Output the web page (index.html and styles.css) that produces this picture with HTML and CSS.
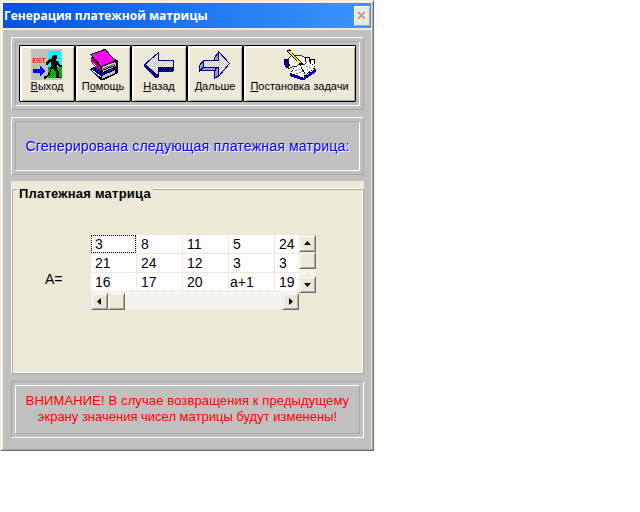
FILE: index.html
```html
<!DOCTYPE html>
<html lang="ru">
<head>
<meta charset="utf-8">
<title>Генерация платежной матрицы</title>
<link rel="stylesheet" href="styles.css">
</head>
<body>
<main class="window">
  <header class="titlebar">
    <h1 class="title">Генерация платежной матрицы</h1>
    <button class="close" aria-label="Закрыть"><svg width="10" height="10" viewBox="0 0 10 10"><path d="M2 2l7 7M9 2l-7 7" stroke="#fff" stroke-width="2"/><path d="M1 1l7 7M8 1l-7 7" stroke="#aca899" stroke-width="2"/></svg></button>
  </header>
  <div class="content">
    <section class="panel toolbar-panel">
      <nav class="panel-inner toolbar">
        <button class="tool"><svg class="icon" viewBox="0 0 32 32" shape-rendering="crispEdges">
          <defs><pattern id="grass" width="2" height="2" patternUnits="userSpaceOnUse"><path fill="#00e000" d="M0 0h2v2H0z"/><path fill="#008000" d="M0 0h1v1H0zM1 1h1v1H1z"/></pattern></defs>
          <path fill="#c0c0c0" d="M0 0h31v31H0z"/><path fill="#0ff" d="M17 2h13v17H17z"/><path fill="url(#grass)" d="M17 18h14v11H17z"/>
          <text class="exit-word" x="1.500" y="14" textLength="13" lengthAdjust="spacingAndGlyphs">EXiT</text>
          <path fill="#00f" d="M2 20h7v-3l6 5-6 5v-3H2z"/>
          <path d="M22 6h4v4h-1v2h2l2 4h2v2h-3l-2-3v5l2 3v5h2v1h-5v-6l-4-4-2 6-3 4h-1v1h-2v-3h3l3-5 1-7v-2h-1l-2 3h-2v-2l3-4 4-1V9h-1V7h1z"/></svg>
          <span class="tool-label"><u>В</u>ыход</span></button>
        <button class="tool"><svg class="icon" viewBox="0 0 32 32" shape-rendering="crispEdges">
          <path d="M3 20l10 11h4l14-7v-7L16 14z"/><path fill="#00f" d="M5 19l8-2 14 4-12 5zM4 22l9 7v-2l-9-7z"/><path fill="#c0c0c0" d="M15 27l13-6v3l-13 6z"/><path stroke="#fff" d="M5 21l9 7"/>
          <path d="M4 12l10 12h3l14-7v-6L16 8z"/><path fill="#f00000" d="M6 12l8-2 14 4-13 5zM5 15l9 7v-3l-9-6z"/><path fill="#c0c0c0" d="M16 20l13-6v3l-13 6z"/><path stroke="#fff" d="M6 14l9 7"/>
          <path d="M3 5l12 17 13-5v-6l-13 4z"/><path fill="#a000a0" d="M4 7l10 12v3L4 11z"/><path fill="#c0c0c0" d="M15 18l13-5v3l-13 5z"/><path stroke="#808080" d="M15 20l13-5"/>
          <path fill="#f0f" stroke="#000" d="M3.500 5.500L18 .5l10.500 11-14 6z"/></svg>
          <span class="tool-label">П<u>о</u>мощь</span></button>
        <button class="tool"><svg class="icon" viewBox="0 0 32 32" shape-rendering="crispEdges">
          <defs><pattern id="weave" width="2" height="2" patternUnits="userSpaceOnUse"><path fill="#fff" d="M0 0h2v2H0z"/><path fill="#c0c0c0" d="M0 0h1v1H0zM1 1h1v1H1z"/></pattern></defs>
          <path fill="#000080" d="M1 15h3l11 10v4h-2L1 18zM16 18h15v4l-2 1H16z"/>
          <path fill="url(#weave)" stroke="#000080" d="M2 15.500L15.500 3.500v8h15v7h-15V27z"/><path fill="none" stroke="#00c" d="M1.500 15.500l14-12"/></svg>
          <span class="tool-label"><u>Н</u>азад</span></button>
        <button class="tool"><svg class="icon" viewBox="0 0 32 32" shape-rendering="crispEdges">
          <path fill="#9999b8" stroke="#0000a0" d="M4.500 11.500l-4 5v6l4-4zM19.500 3.500l-4 5v3h4zM15.500 20v9l4-2v-9z"/>
          <path fill="#9999b8" stroke="#000080" d="M1 21.500l3-3h12v3z"/>
          <path fill="url(#weave)" stroke="#000080" d="M4.500 11.500h15v-9l11 12-11 13v-9h-15z"/></svg>
          <span class="tool-label"><u>Д</u>альше</span></button>
        <button class="tool tool-wide"><svg class="icon" viewBox="0 0 32 32" shape-rendering="crispEdges">
          <path fill="#0000c0" d="M6 25h2l11 4 12-9h1v3L20 31h-3L6 27z"/>
          <path fill="#fff" d="M6.500 24.500l5-9 8-7 12 10-13 10z"/><path fill="none" stroke="#000" stroke-dasharray="2 1" d="M11 16l-4.500 8.500 12 4 13-10-4-4"/>
          <path stroke="#909090" stroke-dasharray="2 1" fill="none" d="M11 22l6-2M12 25l7-3M22 18l4-2M23 21l5-4"/><path stroke="#000" d="M17 18l4 7"/>
          <path fill="#fff" stroke="#000" stroke-width=".8" d="M4 10l3-3 4-1h6l4 3 2 4-3 3-5-1-2 2H9l-3 2H4z"/>
          <path fill="#000" d="M0 10h4l2 6-2 3H2l-2-4z"/><path fill="#00f" d="M1 11h2l1 5-1 2-2-3z"/>
          <path stroke="#000" stroke-width="3" d="M4 1l14 15"/><path stroke="#ffe800" stroke-width="1.700" d="M5 2l11 12"/>
          <path fill="#fff" stroke="#000" d="M21.500 12.500v-4h4v4M26.500 14.500v-4h4v4"/></svg>
          <span class="tool-label"><u>П</u>остановка задачи</span></button>
      </nav>
    </section>
    <section class="panel"><div class="panel-inner heading"><p class="heading-text">Сгенерирована следующая платежная матрица:</p></div></section>
    <fieldset class="group">
      <div class="group-frame">
        <h2 class="group-title"><span>Платежная матрица</span></h2>
        <div class="matrix">
          <span class="matrix-name">A=</span>
          <div class="grid">
            <div class="cells">
              <span class="focus">3</span><span>8</span><span>11</span><span>5</span><span>24</span>
              <span>21</span><span>24</span><span>12</span><span>3</span><span>3</span>
              <span>16</span><span>17</span><span>20</span><span class="tight">a+1</span><span>19</span>
            </div>
            <div class="scroll vertical"><i class="knob"><svg viewBox="0 0 9 9"><path d="M1 6h7L4.500 2z"/></svg></i><i class="knob"></i><i class="track"></i><i class="knob"><svg viewBox="0 0 9 9"><path d="M1 3h7L4.500 7z"/></svg></i></div>
            <div class="scroll horizontal"><i class="knob"><svg viewBox="0 0 9 9"><path d="M6 1v7L2 4.500z"/></svg></i><i class="knob"></i><i class="track"></i><i class="knob"><svg viewBox="0 0 9 9"><path d="M3 1v7l4-3.500z"/></svg></i></div>
          </div>
        </div>
      </div>
    </fieldset>
    <section class="panel sunken"><div class="panel-inner warning"><p class="warning-lead">ВНИМАНИЕ! В случае возвращения к предыдущему</p><p>экрану значения чисел матрицы будут изменены!</p></div></section>
  </div>
</main>
</body>
</html>
```
FILE: styles.css
```css
* { box-sizing: border-box; }
body { margin: 0; background: #fff; font-family: "Liberation Sans", Arial, sans-serif; color: #000; }
p, h1, h2, fieldset { margin: 0; padding: 0; border: 0; min-width: 0; }
button { margin: 0; padding: 0; font: inherit; color: inherit; }
svg { display: block; }

.window {
  width: 374px; height: 451px; padding: 1px; background: #ece9d8;
  border: 1px solid; border-color: #ece9d8 #716f64 #716f64 #ece9d8;
  box-shadow: inset 1px 1px #fff, inset -1px -1px #aca899;
}
.titlebar {
  display: flex; align-items: center; justify-content: space-between;
  height: 25px; margin: 1px; padding: 0 1px; width: 368px;
  background: linear-gradient(90deg, #0054e3, #3d95ff);
}
.title {
  font: bold 12px/25px "Open Sans", "Noto Sans", sans-serif; color: #fff;
  white-space: nowrap;
}
.close {
  display: flex; align-items: center; justify-content: center; width: 16px; height: 20px;
  background: #ece9d8; border: 1px solid; border-color: #fff #aca899 #aca899 #fff;
}
.content {
  display: flex; flex-direction: column; gap: 7px; width: 368px; height: 419px;
  margin: 1px; margin-top: 2px; padding: 7px 7px 0 8px; background: #c0c0c0;
}
.panel { height: 58px; padding: 3px; border: 1px solid; border-color: #fff #a8a89c #a8a89c #fff; }
.panel-inner { height: 100%; border: 1px solid; border-color: #a8a89c #fff #fff #a8a89c; }
.toolbar-panel { height: 73px; }
.sunken { height: 57px; border-color: #a8a89c #fff #fff #a8a89c; }
.sunken .panel-inner { border-color: #fff #a8a89c #a8a89c #fff; }

.toolbar { display: flex; padding: 3px; }
.tool {
  display: flex; flex-direction: column; align-items: center; width: 56px; height: 57px; padding-top: 3px;
  background: #ece9d8; border: 1px solid #000; border-radius: 1px;
  box-shadow: inset 1px 1px #fff, inset 2px 2px #fff, inset -1px -1px #aca899;
}
.tool-wide { width: 113px; }
.icon { width: 32px; height: 32px; }
.exit-word { font: bold 7px "Liberation Sans", sans-serif; fill: #f00; }
.tool-label { margin-top: -1px; font-size: 11px; line-height: 13px; white-space: nowrap; }
.tool-label u { text-underline-offset: 1px; }

.heading { display: flex; align-items: center; justify-content: center; }
.heading-text { margin-top: -1px; font-size: 14px; letter-spacing: .21px; color: #00f; text-shadow: 1px 1px #fff; white-space: nowrap; }

.group { height: 193px; margin-top: -1px; padding-top: 7px; background: #ece9d8; }
.group-frame {
  height: 186px; border: 1px solid; border-color: #fff #aca899 #aca899 #fff;
  box-shadow: inset 1px 1px #aca899, inset -1px -1px #fff;
}
.group-title { height: 14px; margin: -2px 0 0 5px; font-size: 13px; line-height: 14px; letter-spacing: .22px; }
.group-title span { padding: 0 2px; background: #ece9d8; white-space: nowrap; }
.matrix { display: flex; margin: 34px 0 0 33px; font-size: 14px; }
.matrix-name { width: 46px; padding-top: 36px; }
.grid { display: grid; grid-template-columns: 208px 17px; grid-template-rows: 58px 17px; }
.cells {
  display: grid; grid-template-columns: 45px 45px 45px 45px 24px; grid-template-rows: 18px 18px 18px;
  gap: 1px; border-bottom: 1px solid #fff; background: #ece9d8; padding-bottom: 1px;
}
.cells span { padding-left: 4px; line-height: 19px; background: #fff; }
.cells .focus { outline: 1px dotted #000; outline-offset: -1px; }
.cells .tight { padding-left: 1px; }
.scroll { display: flex; }
.vertical { flex-direction: column; }
.knob {
  display: flex; align-items: center; justify-content: center; flex: 0 0 17px; width: 17px; height: 17px;
  background: #ece9d8; border: 1px solid; border-color: #ece9d8 #716f64 #716f64 #ece9d8;
  box-shadow: inset 1px 1px #fff, inset -1px -1px #aca899;
}
.knob svg { width: 9px; height: 9px; }
.track { flex: 1; background: repeating-conic-gradient(#fff 0 25%, #ece9d8 0 50%) 0 0 / 2px 2px; }

.warning { padding-top: 7px; font-size: 13px; line-height: 16px; color: #f00; text-align: center; white-space: nowrap; }
.warning-lead { letter-spacing: .12px; }
```
